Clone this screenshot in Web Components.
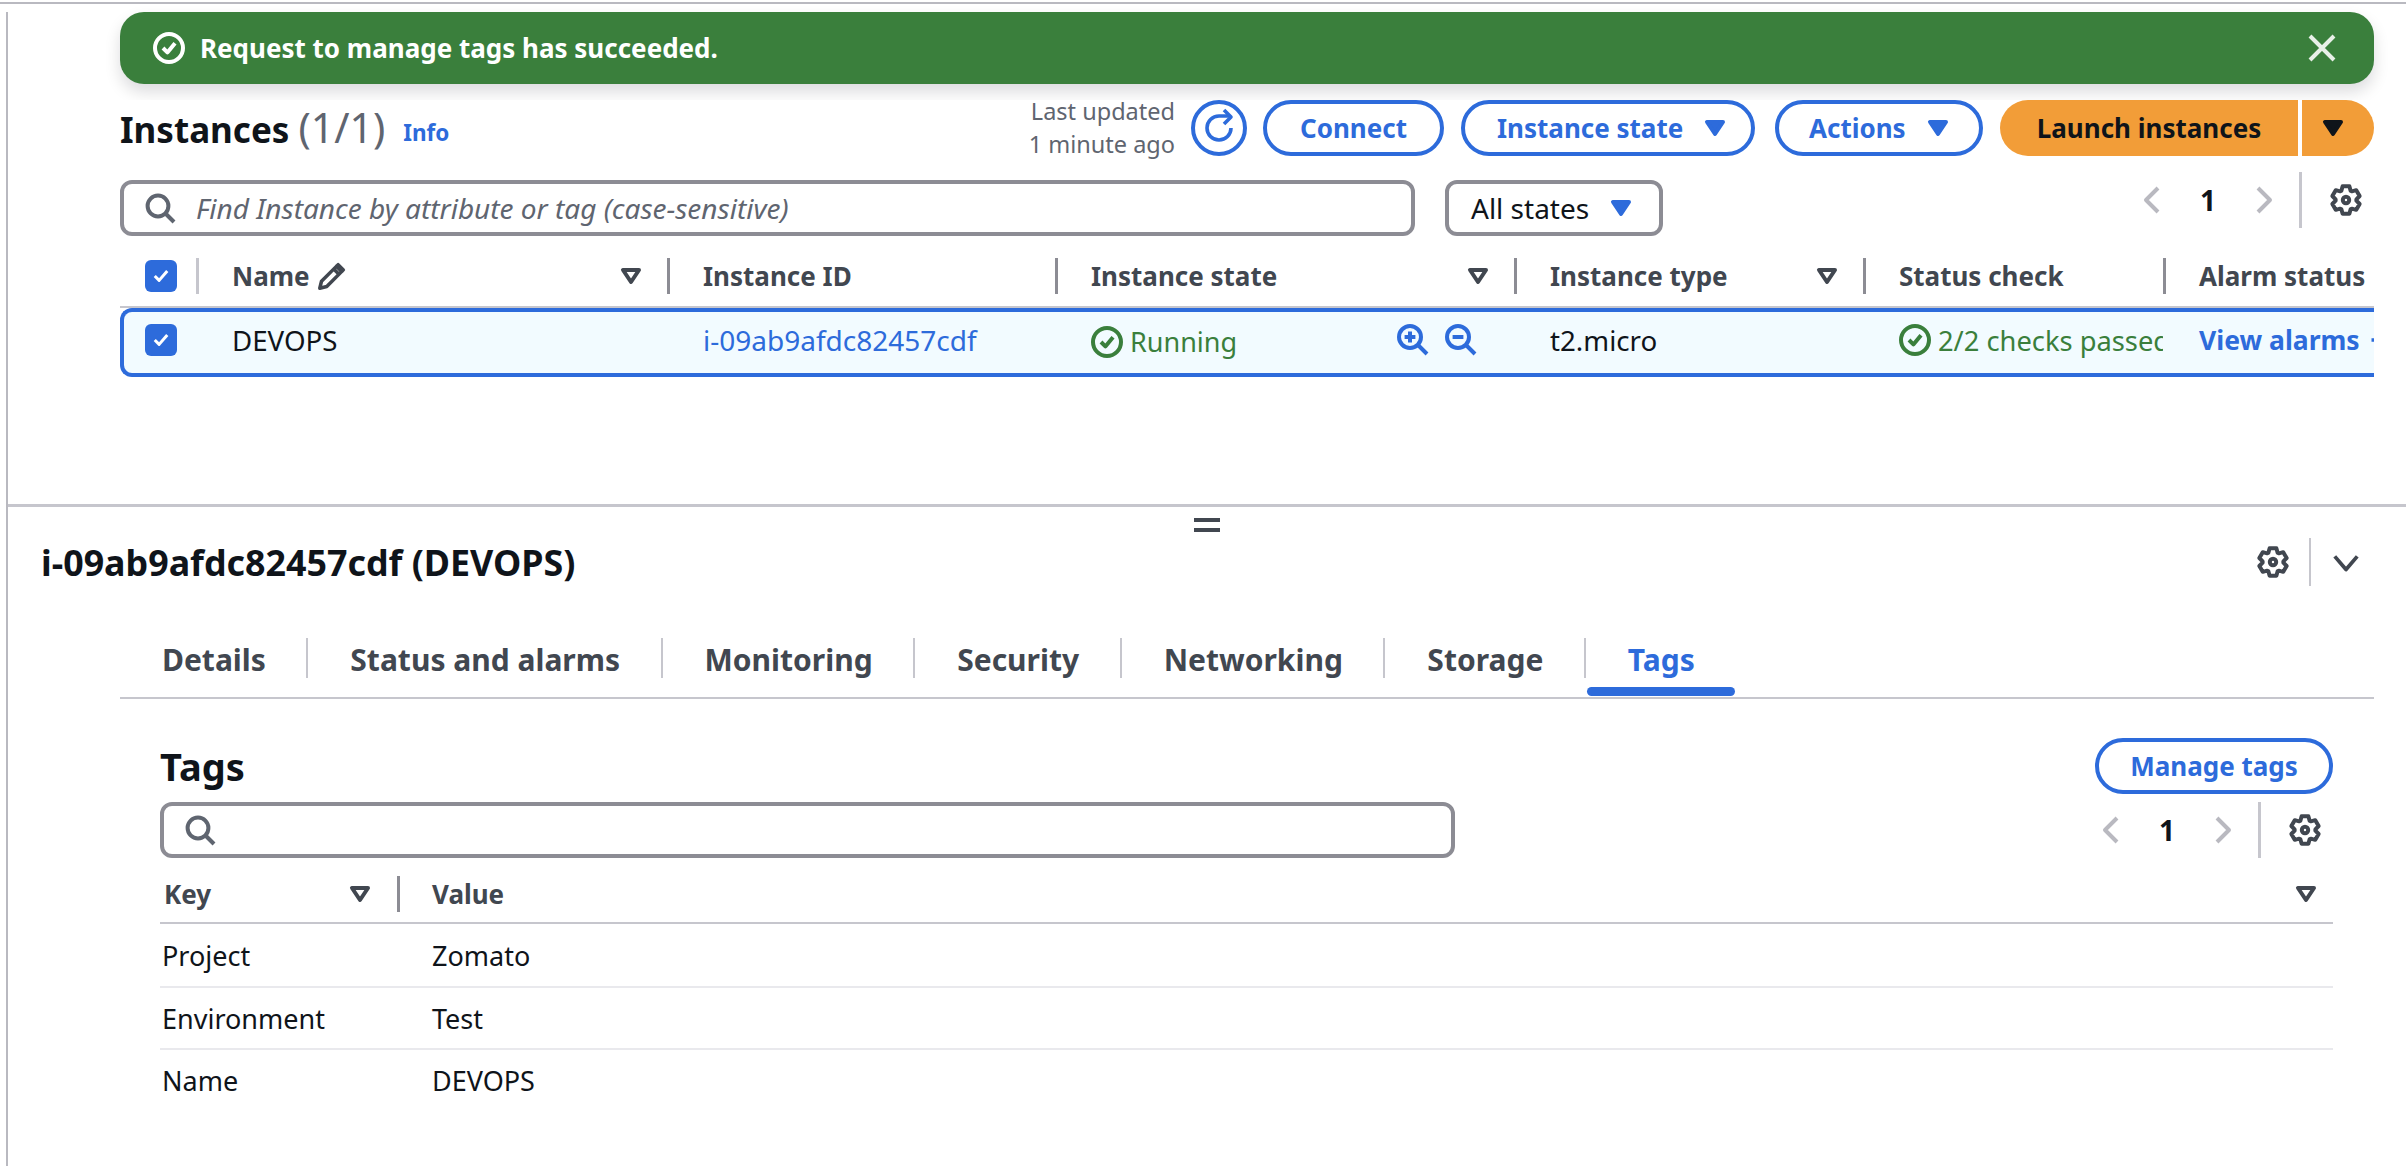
<!DOCTYPE html>
<html>
<head>
<meta charset="utf-8">
<title>Instances</title>
<style>
  html,body{margin:0;padding:0;background:#fff;}
  body{font-family:"Noto Sans","Open Sans",sans-serif;font-size:26px;color:#0f141a;overflow:hidden;}
</style>
</head>
<body>
<ec2-console></ec2-console>
<script>
const gear = (() => {
  // six round lobes, same shape as the console's settings icon
  let pts = [];
  for (let i = 0; i < 6; i++) {
    const a = (i * 60 - 90) * Math.PI / 180;
    [[-0.46, 5.2], [-0.24, 7.1], [0.24, 7.1], [0.46, 5.2]].forEach(([d, r]) => {
      pts.push((8 + r * Math.cos(a + d)).toFixed(2) + ' ' + (8 + r * Math.sin(a + d)).toFixed(2));
    });
  }
  return 'M' + pts.join('L') + 'Z';
})();

const icons = {
  check: '<circle cx="8" cy="8" r="7"/><path d="m5 8 2.2 2.2L11 5.6"/>',
  close: '<path d="m2 2 12 12M14 2 2 14"/>',
  search: '<circle cx="7" cy="7" r="5.2"/><path d="m11 11 4 4"/>',
  refresh: '<path d="M14 8c0 3.31-2.69 6-6 6s-6-2.69-6-6 2.69-6 6-6h5.5"/><path d="M10.5 5.5 14 2l-3.5-3.5" transform="translate(0 .5)"/>',
  caret: '<path d="M4 5h8l-4 6z" fill="currentColor"/>',
  filter: '<path d="M4 5h8l-4 6z"/>',
  pencil: '<path d="m2 11-1 4 4-1 8.5-8.5-3-3z"/><path d="m9 4 3 3"/><path d="m10.500 2.500 1-1 3 3-1 1"/>',
  gear: '<path d="' + gear + '"/><circle cx="8" cy="8" r="1.6"/>',
  left: '<path d="M10.500 2 4.500 8l6 6"/>',
  right: '<path d="m5.500 2 6 6-6 6"/>',
  down: '<path d="m2 5 6 7 6-7"/>',
  tick: '<path d="m3 8 3.500 3.500L13 4"/>',
  zoomin: '<circle cx="6.500" cy="6.500" r="5.500"/><path d="m10.500 10.500 4.500 4.500M6.500 3.800v5.400M3.800 6.500h5.400"/>',
  zoomout: '<circle cx="6.500" cy="6.500" r="5.500"/><path d="m10.500 10.500 4.500 4.500M3.800 6.500h5.400"/>',
  plus: '<path d="M8 2v12M2 8h12"/>'
};

class AwsIcon extends HTMLElement {
  constructor() {
    super();
    this.attachShadow({mode: 'open'});
  }
  connectedCallback() {
    const size = this.getAttribute('size') || 32;
    const sw = this.getAttribute('stroke') || 2;
    this.shadowRoot.innerHTML = `
      <style>
        :host{display:inline-flex;flex:none;width:${size}px;height:${size}px;}
        svg{width:100%;height:100%;fill:none;stroke:currentColor;stroke-width:${sw};stroke-linejoin:round;overflow:visible;}
      </style>
      <svg viewBox="0 0 16 16">${icons[this.getAttribute('name')]}</svg>`;
  }
}

class AwsButton extends HTMLElement {
  constructor() {
    super();
    this.attachShadow({mode: 'open'}).innerHTML = `
      <style>
        :host{display:inline-flex;align-items:center;justify-content:center;box-sizing:border-box;height:56px;
          border:4px solid #2d6bdb;border-radius:28px;color:#2d6bdb;font:700 26px "Noto Sans",sans-serif;white-space:nowrap;gap:16px;background:#fff;}
      </style>
      <slot></slot>`;
  }
}

class AwsSearch extends HTMLElement {
  constructor() {
    super();
    this.attachShadow({mode: 'open'}).innerHTML = `
      <style>
        :host{display:flex;align-items:center;box-sizing:border-box;height:56px;border:4px solid #8c8c94;border-radius:12px;
          padding-left:20px;gap:20px;color:#5f6570;font:italic 400 28px "Noto Sans",sans-serif;white-space:nowrap;}
      </style>
      <aws-icon name="search" size="32"></aws-icon><slot></slot>`;
  }
}

class AwsPager extends HTMLElement {
  constructor() {
    super();
    this.attachShadow({mode: 'open'}).innerHTML = `
      <style>
        :host{display:flex;align-items:center;height:56px;font:700 28px "Noto Sans",sans-serif;color:#0f141a;}
        .arrow{color:#b9b9c0;}
        .num{width:40px;text-align:center;margin:0 19px;}
        .sep{width:3px;height:56px;background:#c6c6cd;margin:0 28px 0 20px;}
        .cog{color:#414750;}
      </style>
      <aws-icon class="arrow" name="left" size="32"></aws-icon>
      <span class="num">1</span>
      <aws-icon class="arrow" name="right" size="32"></aws-icon>
      <span class="sep"></span>
      <aws-icon class="cog" name="gear" size="32"></aws-icon>`;
  }
}

class FlashBar extends HTMLElement {
  constructor() {
    super();
    this.attachShadow({mode: 'open'}).innerHTML = `
      <style>
        :host{display:flex;align-items:center;box-sizing:border-box;height:72px;margin:8px 32px 16px 112px;padding:0 36px 0 33px;
          background:#3a7f3c;border-radius:24px;color:#fff;font:700 26px "Noto Sans",sans-serif;box-shadow:0 8px 16px rgba(0,7,22,.14);}
        .msg{flex:1;margin-left:15px;}
        .x{color:#e8f0e8;}
      </style>
      <aws-icon name="check" size="32"></aws-icon>
      <span class="msg"><slot></slot></span>
      <aws-icon class="x" name="close" size="32"></aws-icon>`;
  }
}

class InstanceTable extends HTMLElement {
  constructor() {
    super();
    this.attachShadow({mode: 'open'}).innerHTML = `
      <style>
        :host{display:block;margin-top:22px;font:400 27.700px "Noto Sans",sans-serif;}
        .head,.row{display:grid;grid-template-columns:76px 471px 388px 459px 349px 300px 211px;}
        .head{height:36px;padding-bottom:12px;border-bottom:2px solid #c6c6cd;color:#414750;font:700 26px "Noto Sans",sans-serif;}
        .th{display:flex;align-items:center;box-sizing:border-box;border-left:3px solid #8c8c94;padding:0 20px 0 33px;white-space:nowrap;overflow:hidden;}
        .th span{flex:1;}
        .th.first{border:0;padding:0 0 0 25px;}
        .th.name{border-left-color:#c6c6cd;}
        .th.name span{flex:none;margin-right:8px;}
        .th.name i{flex:1;}
        .row{box-sizing:border-box;height:69px;padding-bottom:5px;grid-template-columns:72px 471px 388px 459px 349px 300px 211px;background:#f2fbff;
          border:4px solid #2d6bdb;border-right:0;border-radius:12px 0 0 12px;}
        .td{display:flex;align-items:center;box-sizing:border-box;padding:0 0 0 36px;white-space:nowrap;overflow:hidden;}
        .td.first{padding-left:21px;}
        .ok{color:#3a7f3c;gap:7px;}
        .status{font-size:27.300px;}
        .running{padding:0;margin-top:3px;font-size:27px;}
        .link{color:#2d6bdb;}
        .id{font-size:28px;}
        .link.strong{font-size:26.500px;font-weight:700;gap:8px;}
        .state .zoom{margin-left:auto;margin-right:37px;display:flex;gap:16px;color:#2d6bdb;}
        span.check{display:flex;flex:none;align-items:center;justify-content:center;width:32px;height:32px;background:#2d6bdb;border-radius:6px;color:#fff;}
      </style>
      <div class="head">
        <div class="th first"><span class="check"><aws-icon name="tick" size="20" stroke="2.4"></aws-icon></span></div>
        <div class="th name"><span>Name</span><aws-icon name="pencil" size="28"></aws-icon><i></i><aws-icon name="filter" size="32"></aws-icon></div>
        <div class="th"><span>Instance ID</span></div>
        <div class="th"><span>Instance state</span><aws-icon name="filter" size="32"></aws-icon></div>
        <div class="th"><span>Instance type</span><aws-icon name="filter" size="32"></aws-icon></div>
        <div class="th"><span>Status check</span></div>
        <div class="th"><span>Alarm status</span></div>
      </div>
      <div class="row">
        <div class="td first"><span class="check"><aws-icon name="tick" size="20" stroke="2.4"></aws-icon></span></div>
        <div class="td">DEVOPS</div>
        <div class="td link id">i-09ab9afdc82457cdf</div>
        <div class="td state"><span class="td ok running"><aws-icon name="check" size="32"></aws-icon>Running</span><span class="zoom"><aws-icon name="zoomin" size="32"></aws-icon><aws-icon name="zoomout" size="32"></aws-icon></span></div>
        <div class="td">t2.micro</div>
        <div class="td ok status"><aws-icon name="check" size="32"></aws-icon>2/2 checks passed</div>
        <div class="td link strong">View alarms<aws-icon name="plus" size="28"></aws-icon></div>
      </div>`;
  }
}

class InstancesPanel extends HTMLElement {
  constructor() {
    super();
    this.attachShadow({mode: 'open'}).innerHTML = `
      <style>
        :host{display:block;position:relative;box-sizing:border-box;height:404px;padding:0 32px 0 112px;background:#fff;font-family:"Noto Sans",sans-serif;}
        .top{display:flex;align-items:center;height:56px;}
        h1{margin:0;font-size:35px;font-weight:700;line-height:56px;white-space:nowrap;}
        h1 small{font-size:41px;font-weight:400;color:#5f6570;}
        .info{color:#2d6bdb;font-size:22.500px;font-weight:700;margin:8px 0 0 18px;}
        .stamp{margin-left:auto;text-align:right;color:#5f6570;font-size:23.500px;line-height:33px;white-space:nowrap;}
        .refresh{width:56px;padding:0;margin-left:16px;}
        .btns{display:flex;margin-left:16px;}
        .connect{width:181px;}
        .state{width:294px;margin-left:17px;justify-content:flex-start;padding-left:32px;}
        .actions{width:208px;margin-left:20px;justify-content:flex-start;padding-left:30px;}
        .launch{width:298px;margin-left:17px;background:#f29d38;border:0;border-radius:28px 0 0 28px;color:#0f141a;}
        .more{width:72px;margin-left:4px;padding-right:10px;background:#f29d38;border:0;border-radius:0 28px 28px 0;color:#0f141a;}
        .filters{display:flex;align-items:center;margin-top:24px;}
        aws-search{width:1295px;}
        .all{display:flex;align-items:center;gap:16px;box-sizing:border-box;width:218px;height:56px;margin-left:30px;padding-left:22px;
          border:4px solid #8c8c94;border-radius:12px;white-space:nowrap;font-size:28px;}
        .all aws-icon,.state aws-icon,.actions aws-icon{color:#2d6bdb;}
        aws-pager{margin:-16px 12px 0 auto;}
      </style>
      <div class="top">
        <h1>Instances <small>(1/1)</small></h1><span class="info">Info</span>
        <div class="stamp">Last updated<br>1 minute ago</div>
        <aws-button class="refresh"><aws-icon name="refresh" size="32" stroke="1.800"></aws-icon></aws-button>
        <div class="btns">
          <aws-button class="connect">Connect</aws-button>
          <aws-button class="state">Instance state <aws-icon name="caret" size="32"></aws-icon></aws-button>
          <aws-button class="actions">Actions <aws-icon name="caret" size="32"></aws-icon></aws-button>
          <aws-button class="launch">Launch instances</aws-button>
          <aws-button class="more"><aws-icon name="caret" size="32"></aws-icon></aws-button>
        </div>
      </div>
      <div class="filters">
        <aws-search>Find Instance by attribute or tag (case-sensitive)</aws-search>
        <div class="all">All states <aws-icon name="caret" size="32"></aws-icon></div>
        <aws-pager></aws-pager>
      </div>
      <instance-table></instance-table>`;
  }
}

class DetailTab extends HTMLElement {
  constructor() {
    super();
    this.attachShadow({mode: 'open'}).innerHTML = `
      <style>
        :host{display:block;box-sizing:border-box;height:59px;color:#414750;font:700 30px "Noto Sans",sans-serif;white-space:nowrap;}
        .label{display:flex;align-items:center;height:40px;padding:2px 40.500px 0 42px;box-sizing:border-box;border-left:2px solid #c6c6cd;}
        :host(:first-child) .label{border-left:0;}
        :host([active]){color:#2d6bdb;}
        .bar{display:none;height:9px;margin:9px 0 0 3px;background:#2d6bdb;border-radius:5px;}
        :host([active]) .bar{display:block;}
      </style>
      <div class="label"><slot></slot></div><div class="bar"></div>`;
  }
}

class TagsTable extends HTMLElement {
  constructor() {
    super();
    this.attachShadow({mode: 'open'}).innerHTML = `
      <style>
        :host{display:block;margin-top:18px;font:400 27px "Noto Sans",sans-serif;}
        .head{display:grid;grid-template-columns:237px 1fr;height:36px;padding-bottom:10px;border-bottom:2px solid #c6c6cd;color:#414750;font:700 26px "Noto Sans",sans-serif;}
        .th{display:flex;align-items:center;box-sizing:border-box;padding-left:4px;}
        .th span{flex:1;}
        .th.key{padding-right:21px;}
        .th.val{border-left:3px solid #8c8c94;padding:0 11px 0 32px;}
        .row{display:grid;grid-template-columns:238px 1fr;align-items:center;height:60px;border-bottom:2px solid #e9e9ed;}
        .head+.row{height:62px;}
        .row:last-child{border-bottom:0;}
        .row div{padding-left:2px;}
        .row div+div{padding-left:34px;}
      </style>
      <div class="head">
        <div class="th key"><span>Key</span><aws-icon name="filter" size="32"></aws-icon></div>
        <div class="th val"><span>Value</span><aws-icon name="filter" size="32"></aws-icon></div>
      </div>
      <div class="row"><div>Project</div><div>Zomato</div></div>
      <div class="row"><div>Environment</div><div>Test</div></div>
      <div class="row"><div>Name</div><div>DEVOPS</div></div>`;
  }
}

class DetailPanel extends HTMLElement {
  constructor() {
    super();
    this.attachShadow({mode: 'open'}).innerHTML = `
      <style>
        :host{display:block;border-top:3px solid #c6c6cd;font-family:"Noto Sans",sans-serif;color:#0f141a;}
        .grip{width:26px;height:14px;margin:11px auto 0;box-sizing:border-box;border-top:4px solid #414750;border-bottom:4px solid #414750;}
        .title{display:flex;align-items:center;height:48px;margin-top:6px;padding:0 45px 0 33px;}
        h2{flex:1;margin:0;font-size:35.800px;font-weight:700;white-space:nowrap;}
        .title aws-icon{color:#414750;}
        .sep{width:2px;height:48px;background:#c6c6cd;margin:0 20px 0 20px;}
        .tabs{display:flex;margin:52px 32px 0 112px;border-bottom:2px solid #c6c6cd;}
        .tags{margin:39px 73px 0 152px;}
        .tags-head{display:flex;align-items:center;justify-content:space-between;height:56px;}
        h3{margin:0;font-size:38px;font-weight:700;}
        .manage{width:238px;}
        .search-row{display:flex;align-items:center;justify-content:space-between;margin-top:8px;}
        aws-search{width:1295px;}
      </style>
      <div class="grip"></div>
      <div class="title">
        <h2>i-09ab9afdc82457cdf (DEVOPS)</h2>
        <aws-icon name="gear" size="32"></aws-icon><span class="sep"></span><aws-icon name="down" size="30"></aws-icon>
      </div>
      <div class="tabs">
        <detail-tab>Details</detail-tab>
        <detail-tab>Status and alarms</detail-tab>
        <detail-tab>Monitoring</detail-tab>
        <detail-tab>Security</detail-tab>
        <detail-tab>Networking</detail-tab>
        <detail-tab>Storage</detail-tab>
        <detail-tab active>Tags</detail-tab>
      </div>
      <div class="tags">
        <div class="tags-head"><h3>Tags</h3><aws-button class="manage">Manage tags</aws-button></div>
        <div class="search-row"><aws-search></aws-search><aws-pager style="margin-right:12px"></aws-pager></div>
        <tags-table></tags-table>
      </div>`;
  }
}

class Ec2Console extends HTMLElement {
  constructor() {
    super();
    this.attachShadow({mode: 'open'}).innerHTML = `
      <style>
        :host{display:block;padding-top:2px;height:1166px;box-sizing:border-box;}
        .frame{box-sizing:border-box;height:100%;border-top:2px solid #b9b9c0;padding-left:6px;}
        .inner{box-sizing:border-box;height:100%;border-left:2px solid #b9b9c0;}
      </style>
      <div class="frame"><div class="inner">
        <flash-bar>Request to manage tags has succeeded.</flash-bar>
        <instances-panel></instances-panel>
        <detail-panel></detail-panel>
      </div></div>`;
  }
}

customElements.define('aws-icon', AwsIcon);
customElements.define('aws-button', AwsButton);
customElements.define('aws-search', AwsSearch);
customElements.define('aws-pager', AwsPager);
customElements.define('flash-bar', FlashBar);
customElements.define('instance-table', InstanceTable);
customElements.define('instances-panel', InstancesPanel);
customElements.define('detail-tab', DetailTab);
customElements.define('tags-table', TagsTable);
customElements.define('detail-panel', DetailPanel);
customElements.define('ec2-console', Ec2Console);
</script>
</body>
</html>
